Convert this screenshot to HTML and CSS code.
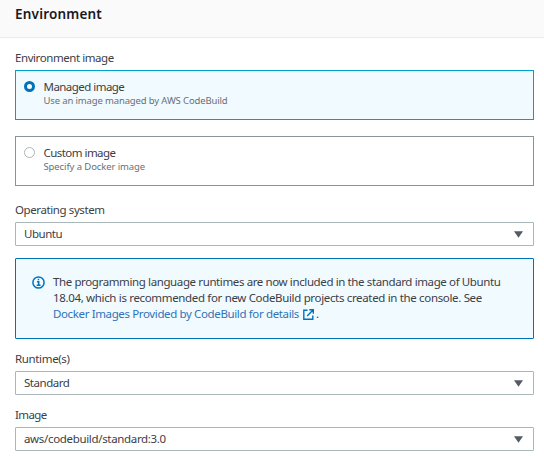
FILE: index.html
```html
<!DOCTYPE html>
<html lang="en">
<head>
<meta charset="utf-8">
<title>Environment</title>
<link rel="stylesheet" href="styles.css">
</head>
<body>
<header class="header"><h2 class="title"><span class="t-title">Environment</span></h2></header>
<main class="form">
  <div class="label"><span class="t-env">Environment image</span></div>
  <div class="tile selected">
    <span class="radio"></span>
    <div><div class="name"><span class="t-managed">Managed image</span></div><div class="hint"><span class="t-use">Use an image managed by AWS CodeBuild</span></div></div>
  </div>
  <div class="tile">
    <span class="radio"></span>
    <div><div class="name"><span class="t-custom">Custom image</span></div><div class="hint"><span class="t-specify">Specify a Docker image</span></div></div>
  </div>
  <div class="label"><span class="t-os">Operating system</span></div>
  <div class="select"><span class="t-ubuntu">Ubuntu</span><svg class="caret" viewBox="0 0 9 7"><path d="M0 .3h9L4.5 6.8z"/></svg></div>
  <div class="info">
    <svg class="info-icon" viewBox="0 0 13 13"><circle cx="6.5" cy="6.5" r="5.6"/><path d="M5 5.8h1.7v3.4M4.7 9.3h3.9M5.7 3.6h1.5"/></svg>
    <div class="message">
      <div><span class="t-line1">The programming language runtimes are now included in the standard image of Ubuntu</span></div>
      <div><span class="t-line2">18.04, which is recommended for new CodeBuild projects created in the console. See</span></div>
      <div class="link-row"><a class="link"><span class="t-link">Docker Images Provided by CodeBuild for details</span><svg class="external" viewBox="0 0 11 11"><path d="M4.5 1.2H.8v9h9V6.5M6.3.8h4v4M10 1.1L4.2 6.9"/></svg></a><span>.</span></div>
    </div>
  </div>
  <div class="label"><span class="t-runtime">Runtime(s)</span></div>
  <div class="select"><span class="t-standard">Standard</span><svg class="caret" viewBox="0 0 9 7"><path d="M0 .3h9L4.5 6.8z"/></svg></div>
  <div class="label last"><span class="t-image">Image</span></div>
  <div class="select"><span class="t-aws">aws/codebuild/standard:3.0</span><svg class="caret" viewBox="0 0 9 7"><path d="M0 .3h9L4.5 6.8z"/></svg></div>
</main>
</body>
</html>
```
FILE: styles.css
```css
* { box-sizing: border-box; }
body { margin: 0; height: 456px; overflow: hidden; background: #fff; color: #3c4045; font: 11.5px/16px "Noto Sans", "Open Sans", sans-serif; }
.header { height: 38px; padding: 6px 15px 0; background: #fafafa; border-bottom: 1px solid #eaeded; }
.title { margin: 0; font-size: 13.5px; line-height: 17px; font-weight: 600; letter-spacing: .2px; color: #16191f; }
.form { padding: 12px 10px 0 15px; }
.label { height: 20px; }
.tile { display: flex; height: 50px; margin-bottom: 16px; padding: 8px 8px 0; border: 1px solid #879596; }
.selected { background: #f1faff; border-color: #00a1c9; }
.radio { width: 11px; height: 11px; margin: 2px 8.5px 0 0; border: 1px solid #aab7b8; border-radius: 50%; background: #fff; flex: none; }
.selected .radio { border: 3.5px solid #0073bb; }
.name { height: 15px; }
.hint { height: 13px; font-size: 9.5px; line-height: 13px; color: #687078; }
.select { display: flex; align-items: center; justify-content: space-between; height: 24px; padding: 0 10px 1px 8px; border: 1px solid #aab7b8; border-radius: 1px; }
.caret { width: 9px; height: 7px; margin-top: 1px; fill: #545b64; }
.info { display: flex; height: 81px; margin: 12px 0; padding: 15px 16px 0; background: #f1faff; border: 1px solid #0073bb; border-radius: 1px; }
.info-icon { width: 13px; height: 13px; margin: 2px 8px 0 0; flex: none; fill: none; stroke: #0073bb; stroke-width: 1.5; }
.message { white-space: nowrap; }
.link-row { display: flex; }
.link { display: flex; align-items: center; color: #2f72b8; }
.external { width: 11px; height: 11px; margin: 0 2px 0 4px; fill: none; stroke: #0073bb; stroke-width: 1.4; }
.last { margin-top: 12px; }
.t-env { letter-spacing: -.43px; }
.t-managed, .t-custom { letter-spacing: -.54px; }
.t-use { letter-spacing: -.14px; }
.t-specify { letter-spacing: -.1px; }
.t-os { letter-spacing: -.4px; }
.t-ubuntu, .t-standard { letter-spacing: -.47px; }
.t-line1 { letter-spacing: -.385px; }
.t-link { letter-spacing: -.37px; }
.t-line2 { letter-spacing: -.34px; }
.t-runtime { letter-spacing: -.35px; }
.t-image { letter-spacing: -.6px; }
.t-aws { letter-spacing: -.33px; }
```
